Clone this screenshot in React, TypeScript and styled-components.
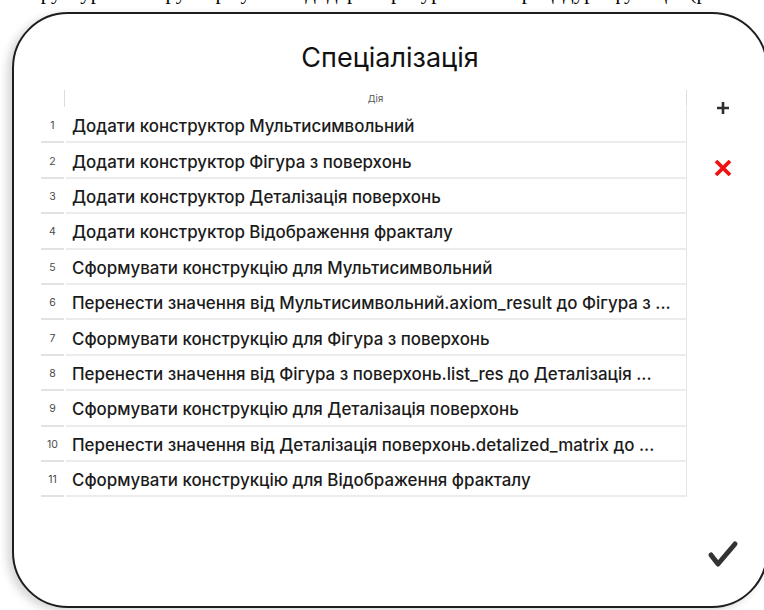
import React from "react";
import styled, { createGlobalStyle } from "styled-components";

const GlobalStyle = createGlobalStyle`
  html, body {
    margin: 0;
    padding: 0;
    background: #ffffff;
    overflow: hidden;
  }
  body {
    width: 764px;
    height: 610px;
  }
`;

const Page = styled.div`
  display: flex;
  flex-direction: column;
  height: 610px;
`;

// Last line of the surrounding document, only its descenders show above the card
const DocLine = styled.div`
  height: 8px;
  min-height: 0;
  padding-left: 22px;
  overflow: hidden;
  font-family: "Liberation Serif", serif;
  font-size: 21px;
  line-height: 24px;
  color: #000;
  white-space: nowrap;
  flex-shrink: 0;

  span {
    display: block;
    margin-top: -20px;
  }
`;

const Frame = styled.div`
  box-sizing: border-box;
  margin: 4px 0 0 12px;
  width: 756px;
  height: 596px;
  border: 2px solid #1e1e1e;
  border-radius: 56px;
  background: #fff;
  box-shadow: -5px 3px 9px rgba(0, 0, 0, 0.16);
  display: flex;
  flex-direction: column;
  flex-shrink: 0;
`;

const Title = styled.h1`
  margin: 29px 0 0;
  font-family: Inter, "Liberation Sans", sans-serif;
  font-weight: 400;
  font-size: 27px;
  line-height: 30px;
  text-align: center;
  color: #111;
`;

const Body = styled.div`
  flex: 1;
  display: flex;
  margin-top: 15px;
`;

const Table = styled.div`
  margin-left: 26px;
  width: 647px;
  display: flex;
  flex-direction: column;
  font-family: Inter, "Liberation Sans", sans-serif;
`;

const HeaderRow = styled.div`
  display: grid;
  grid-template-columns: 24px 1fr;
  height: 20px;
`;

const HeaderCell = styled.div<{ $divided?: boolean }>`
  display: flex;
  align-items: center;
  justify-content: center;
  font-size: 9.5px;
  color: #555;
  border-left: ${(p) => (p.$divided ? "1px solid #dcdcdc" : "none")};
  border-right: ${(p) => (p.$divided ? "1px solid #dcdcdc" : "none")};
  margin: 2px 0 1px;
`;

const Row = styled.div`
  display: grid;
  grid-template-columns: 23px 1fr;
  column-gap: 2px;
  height: 35.4px;
  padding-left: 1px;
`;

const NumCell = styled.div`
  display: flex;
  align-items: center;
  justify-content: center;
  padding-top: 2px;
  font-size: 10.5px;
  color: #4a4a4a;
  border-bottom: 2px solid #e2e2e2;
`;

const TextCell = styled.div`
  display: flex;
  align-items: center;
  min-width: 0;
  padding: 0 2px 0 6px;
  font-size: 16.9px;
  font-weight: 500;
  color: #1b1b1b;
  border-bottom: 2px solid #ececec;
  border-right: 1px solid #e4e4e4;
  overflow: hidden;

  span {
    white-space: nowrap;
    overflow: hidden;
    text-overflow: ellipsis;
    padding-top: 3px;
  }
`;

const Side = styled.div`
  width: 72px;
  display: flex;
  flex-direction: column;
  align-items: center;
  padding: 12px 0 37px;
`;

const IconButton = styled.button<{ $gap?: number }>`
  border: none;
  background: none;
  padding: 0;
  margin-top: ${(p) => p.$gap ?? 0}px;
  display: flex;
  cursor: pointer;
`;

const Confirm = styled(IconButton)`
  margin-top: auto;
`;

const steps = [
  "Додати конструктор Мультисимвольний",
  "Додати конструктор Фігура з поверхонь",
  "Додати конструктор Деталізація поверхонь",
  "Додати конструктор Відображення фракталу",
  "Сформувати конструкцію для Мультисимвольний",
  "Перенести значення від Мультисимвольний.axiom_result до Фігура з ...",
  "Сформувати конструкцію для Фігура з поверхонь",
  "Перенести значення від Фігура з поверхонь.list_res до Деталізація ...",
  "Сформувати конструкцію для Деталізація поверхонь",
  "Перенести значення від Деталізація поверхонь.detalized_matrix до ...",
  "Сформувати конструкцію для Відображення фракталу",
];

const PlusIcon = () => (
  <svg width="16" height="16" viewBox="0 0 16 16">
    <path d="M8 2v12M2 8h12" stroke="#2e2e2e" strokeWidth="2.6" />
  </svg>
);

const CrossIcon = () => (
  <svg width="20" height="20" viewBox="0 0 20 20">
    <path d="M3 3l14 14M17 3L3 17" stroke="#f01010" strokeWidth="3.8" />
  </svg>
);

const CheckIcon = () => (
  <svg width="34" height="30" viewBox="0 0 34 30">
    <path
      d="M5 16l7 9L29 5"
      fill="none"
      stroke="#333"
      strokeWidth="5"
      strokeLinecap="round"
      strokeLinejoin="round"
    />
  </svg>
);

export default function App() {
  return (
    <>
      <GlobalStyle />
      <Page>
        <DocLine>
          <span>структура конструктора у вигляді дерева рекурсивних процедур і функцій (рис</span>
        </DocLine>
        <Frame>
          <Title>Спеціалізація</Title>
          <Body>
            <Table>
              <HeaderRow>
                <div />
                <HeaderCell $divided>Дія</HeaderCell>
              </HeaderRow>
              {steps.map((step, i) => (
                <Row key={i}>
                  <NumCell>{i + 1}</NumCell>
                  <TextCell>
                    <span>{step}</span>
                  </TextCell>
                </Row>
              ))}
            </Table>
            <Side>
              <IconButton aria-label="add">
                <PlusIcon />
              </IconButton>
              <IconButton aria-label="remove" $gap={42}>
                <CrossIcon />
              </IconButton>
              <Confirm aria-label="confirm">
                <CheckIcon />
              </Confirm>
            </Side>
          </Body>
        </Frame>
      </Page>
    </>
  );
}
